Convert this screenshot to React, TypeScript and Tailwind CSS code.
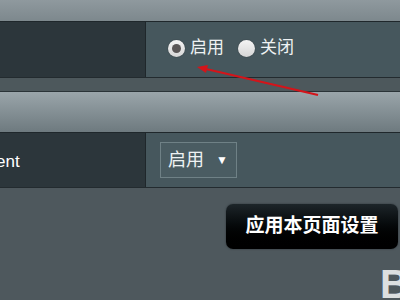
import React from 'react';

const Radio = ({ checked, label }: { checked?: boolean; label: string }) => (
  <label className="flex items-center gap-[5px]">
    <span className="w-[17px] h-[17px] rounded-full bg-gradient-to-b from-[#f4f4f4] to-[#d6d6d6] flex items-center justify-center shadow-[0_0_1px_#222]">
      {checked && <span className="w-[9px] h-[9px] rounded-full bg-[#5a5656]" />}
    </span>
    <span className="text-[17px] text-[#eef2f3]">{label}</span>
  </label>
);

export default function App() {
  return (
    <div
      className="relative w-[400px] h-[300px] overflow-hidden bg-[#4e585d] font-['Liberation_Sans','Noto_Sans_CJK_SC',sans-serif]"
    >
      {/* top header band */}
      <div className="h-[21px] bg-gradient-to-b from-[#8f999e] to-[#7d888d]" />
      <div className="h-[1px] bg-[#1f272b]" />

      {/* row 1 */}
      <div className="flex h-[56px] border-b border-[#232b2f]">
        <div className="w-[146px] bg-[#2c363b] border-r border-[#1f272b]" />
        <div className="flex-1 bg-[#46575d] flex items-center gap-[14px] pl-[22px] pb-[3px]">
          <Radio checked label="启用" />
          <Radio label="关闭" />
        </div>
      </div>

      <div className="h-[13px] bg-[#4d585c]" />
      <div className="h-[1px] bg-[#2a3337]" />

      {/* section header */}
      <div className="h-[40px] bg-gradient-to-b from-[#9aa5aa] to-[#6e7a7f]" />
      <div className="h-[1px] bg-[#1f272b]" />

      {/* row 2 */}
      <div className="flex h-[55px] border-b border-[#232b2f]">
        <div className="w-[146px] bg-[#2c363b] border-r border-[#1f272b] flex items-center overflow-hidden">
          <span className="text-[17px] text-white -ml-[37px] pt-[3px] whitespace-nowrap">Current</span>
        </div>
        <div className="flex-1 bg-[#46575d] flex items-center pl-[14px]">
          <div className="w-[77px] h-[36px] border border-[#6f8186] bg-[#4a5c62] flex items-center pl-[7px] gap-[12px]">
            <span className="text-[18px] text-[#eef2f3]">启用</span>
            <span className="text-[12px] text-white">▼</span>
          </div>
        </div>
      </div>

      {/* apply button */}
      <div className="flex justify-end pt-[16px] pr-[2px]">
        <button className="w-[172px] h-[45px] rounded-[7px] bg-gradient-to-b from-[#1d2529] to-[#000000] shadow-[0_0_2px_#2a3236] text-white font-bold text-[19px] font-['Liberation_Serif','Noto_Sans_CJK_SC',serif] flex items-center justify-center">
          应用本页面设置
        </button>
      </div>

      {/* logo fragment */}
      <div className="absolute left-[380px] top-[264px] text-[40px] font-bold text-[#dcdfe0] font-['Liberation_Sans',sans-serif] leading-none">
        B
      </div>

      {/* red arrow annotation */}
      <svg className="absolute left-0 top-0" width="400" height="300">
        <line x1="318" y1="95" x2="206" y2="69" stroke="#d4141a" strokeWidth="2.2" />
        <polygon points="197,67 208,65 206,73" fill="#d4141a" />
      </svg>
    </div>
  );
}
